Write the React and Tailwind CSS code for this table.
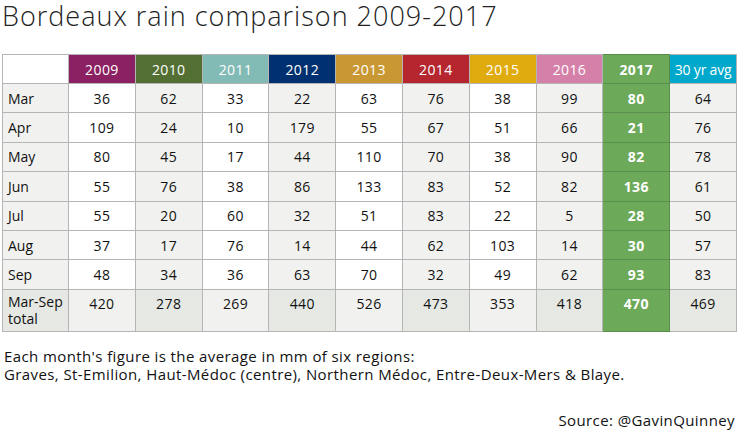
import React from "react";

const years = [
  { y: "2009", bg: "bg-[#8b2162]" },
  { y: "2010", bg: "bg-[#546f34]" },
  { y: "2011", bg: "bg-[#82bab5]" },
  { y: "2012", bg: "bg-[#00306f]" },
  { y: "2013", bg: "bg-[#c99832]" },
  { y: "2014", bg: "bg-[#b6262f]" },
  { y: "2015", bg: "bg-[#e0ab0f]" },
  { y: "2016", bg: "bg-[#d580a9]" },
  { y: "2017", bg: "bg-[#6ca959]" },
  { y: "30 yr avg", bg: "bg-[#00a9cb]" },
];

const rows = [
  ["Mar", 36, 62, 33, 22, 63, 76, 38, 99, 80, 64],
  ["Apr", 109, 24, 10, 179, 55, 67, 51, 66, 21, 76],
  ["May", 80, 45, 17, 44, 110, 70, 38, 90, 82, 78],
  ["Jun", 55, 76, 38, 86, 133, 83, 52, 82, 136, 61],
  ["Jul", 55, 20, 60, 32, 51, 83, 22, 5, 28, 50],
  ["Aug", 37, 17, 76, 14, 44, 62, 103, 14, 30, 57],
  ["Sep", 48, 34, 36, 63, 70, 32, 49, 62, 93, 83],
];

const total = [420, 278, 269, 440, 526, 473, 353, 418, 470, 469];

const font = { fontFamily: "'Open Sans', 'DejaVu Sans', sans-serif" };

export default function App() {
  return (
    <div className="w-[738px] h-[431px] bg-white overflow-hidden text-[#111]" style={font}>
      <div className="h-[55px] pl-[2px]">
        <h1 className="-mt-[1px] text-[27px] font-light leading-[34px] tracking-[1px] text-[#222]">
          Bordeaux rain comparison 2009-2017
        </h1>
      </div>

      <table className="ml-[2px] w-[735px] table-fixed border-collapse text-[14px]">
        <thead>
          <tr className="h-[29px]">
            <th className="w-[66px] border border-[#b5b5b5] bg-white" />
            {years.map((c) => (
              <th
                key={c.y}
                className={`border text-white text-center px-0 whitespace-nowrap ${c.bg} ${
                  c.y === "2017" ? "font-bold border-[#5b8e4b]" : "font-normal border-[#b5b5b5]"
                } ${c.y === "30 yr avg" ? "tracking-[-0.2px]" : "tracking-[0.4px]"}`}
              >
                {c.y}
              </th>
            ))}
          </tr>
        </thead>
        <tbody>
          {rows.map((r) => (
            <tr key={r[0]} className="h-[29.4px]">
              <td className="border border-[#b5b5b5] bg-[#f1f2ef] pl-[5px]">{r[0]}</td>
              {r.slice(1).map((v, i) => (
                <td
                  key={i}
                  className={`border text-center tracking-[0.4px] ${
                    i === 8
                      ? "bg-[#6ca959] text-white font-bold border-[#5b8e4b]"
                      : i % 2 === 1
                      ? "bg-[#f1f2ef] border-[#b5b5b5]"
                      : "bg-white border-[#b5b5b5]"
                  }`}
                >
                  {v}
                </td>
              ))}
            </tr>
          ))}
          <tr className="h-[42px]">
            <td className="border border-[#b5b5b5] bg-[#e5e8e3] pl-[5px] align-top leading-[17px] pt-[3px]">
              Mar-Sep total
            </td>
            {total.map((v, i) => (
              <td
                key={i}
                className={`border text-center align-top pt-[3px] tracking-[0.4px] ${
                  i === 8
                    ? "bg-[#6ca959] text-white font-bold border-[#5b8e4b]"
                    : i % 2 === 1
                    ? "bg-[#e5e8e3] border-[#b5b5b5]"
                    : "bg-[#f1f2ef] border-[#b5b5b5]"
                }`}
              >
                {v}
              </td>
            ))}
          </tr>
        </tbody>
      </table>

      <div className="pl-[4px] pt-[15px] text-[15px] leading-[18px] tracking-[0.4px] text-[#111]">
        <p>Each month's figure is the average in mm of six regions:</p>
        <p>Graves, St-Emilion, Haut-Médoc (centre), Northern Médoc, Entre-Deux-Mers &amp; Blaye.</p>
        <p className="text-right pr-[3px] pt-[28px]">Source: @GavinQuinney</p>
      </div>
    </div>
  );
}
